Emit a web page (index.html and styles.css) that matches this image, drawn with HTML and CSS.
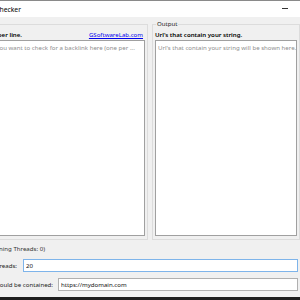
FILE: index.html
```html
<!DOCTYPE html>
<html lang="en">
<head>
  <meta charset="UTF-8">
  <meta name="viewport" content="width=device-width, initial-scale=1.0">
  <title>Backlink Checker</title>
  <link rel="stylesheet" href="styles.css">
</head>
<body>
  <div class="window">
    <div class="frame">
      <div class="titlebar">
        <span class="title">Backlink Checker</span>
        <span class="min"></span>
      </div>

      <div class="content">
        <div class="groups">
          <fieldset class="group group-input">
            <legend>Input</legend>
            <div class="group-head">
              <span class="head-label">Enter url's, one per line.</span>
              <a class="link" href="#">GSoftwareLab.com</a>
            </div>
            <textarea class="urls" placeholder="Enter the url's you want to check for a backlink here (one per ..."></textarea>
          </fieldset>

          <fieldset class="group group-output">
            <legend>Output</legend>
            <div class="group-head">
              <span class="head-text">Url's that contain your string.</span>
            </div>
            <textarea class="urls" placeholder="Url's that contain your string will be shown here."></textarea>
          </fieldset>
        </div>

        <div class="status">(Remaining Threads: 0)</div>

        <div class="field">
          <label class="field-label label-threads" for="threads">Threads:</label>
          <input class="field-input focused" id="threads" value="20">
        </div>
        <div class="field">
          <label class="field-label label-string" for="needle">String that should be contained:</label>
          <input class="field-input" id="needle" value="https://mydomain.com">
        </div>
      </div>
    </div>
  </div>
</body>
</html>
```

FILE: styles.css
```css
html, body {
  margin: 0;
  height: 100%;
}
body {
  background: #1e1e1e;
  font-family: 'Noto Sans', 'DejaVu Sans', sans-serif;
  font-size: 6.1px;
  color: #000;
  overflow: hidden;
}
.window {
  width: 300px;
  height: 297px;
  overflow: hidden;
  background: #f0f0f0;
}
/* the window is wider than the shot: its left part sits off screen */
.frame {
  margin-left: -59px;
  width: 359px;
}
/* labels are pinned by their right end, so any overflow goes left */
.title,
.head-label,
.status,
.field-label {
  display: flex;
  justify-content: flex-end;
  flex-shrink: 0;
  white-space: nowrap;
}
.titlebar {
  display: flex;
  align-items: center;
  height: 16px;
  background: #fff;
  border-top: 1px solid #8a8a8a;
}
.title {
  width: 80px;
  font-size: 6.8px;
}
.min {
  margin-left: auto;
  margin-right: 12px;
  margin-bottom: 2px;
  width: 6px;
  height: 1px;
  background: #333;
}
.content {
  padding: 2px 0 6px 8px;
}
.groups {
  display: grid;
  grid-template-columns: 199px 148px;
  gap: 4px;
}
.group {
  margin: 0;
  padding: 0 2px 3px 2px;
  border: 1px solid #dcdcdc;
  min-width: 0;
}
.group legend {
  padding: 0 1px;
  margin-left: 1px;
  line-height: 10px;
  color: #222;
}
.group-head {
  display: flex;
  justify-content: space-between;
  align-items: center;
  height: 10px;
  padding-right: 2px;
}
.head-label,
.head-text {
  font-weight: 600;
  white-space: nowrap;
}
.head-label {
  width: 70px;
}
.link {
  color: #0000ee;
  text-decoration: underline;
}
.urls {
  display: block;
  box-sizing: border-box;
  width: 100%;
  height: 196px;
  margin: 1px 0 0;
  padding: 2px 0 2px 2px;
  border: 1px solid #a0a0a0;
  background: #fff;
  font: inherit;
  white-space: pre;
  resize: none;
  outline: none;
}
.urls::placeholder {
  color: #8d8d8d;
}
.status {
  margin-top: 4px;
  margin-left: -8px;
  width: 104px;
  line-height: 10px;
  color: #333;
}
.field {
  display: flex;
  align-items: center;
  margin-top: 5px;
  margin-left: -8px;
  padding-right: 2px;
}
.field + .field {
  margin-top: 6px;
}
.field-label {
  color: #222;
}
.label-threads {
  width: 76px;
  margin-right: 6px;
}
.label-string {
  width: 112px;
  margin-right: 5px;
}
.field-input {
  flex: 1;
  min-width: 0;
  box-sizing: border-box;
  height: 13px;
  padding: 0 2px;
  border: 1px solid #b0b0b0;
  background: #fff;
  font: inherit;
  color: #111;
  outline: none;
}
.field-input.focused {
  border-color: #7eb4ea;
}
```
